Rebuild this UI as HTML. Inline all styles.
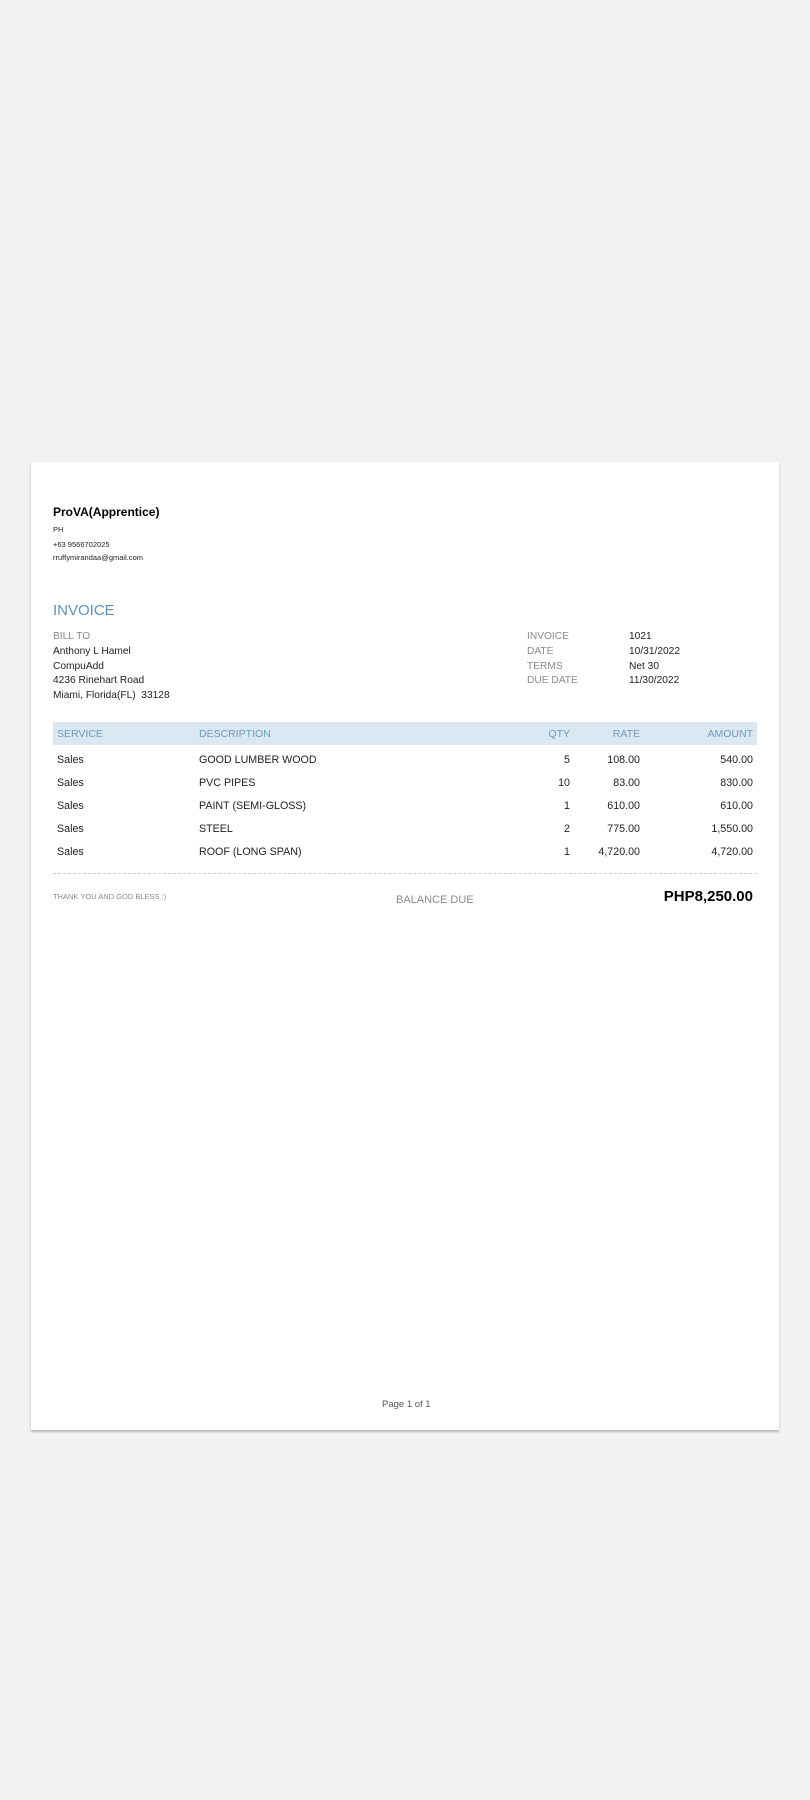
<!DOCTYPE html>
<html><head><meta charset="utf-8"><style>
*{margin:0;padding:0;box-sizing:border-box}
body{width:810px;height:1800px;background:#f0f2f4;font-family:"Liberation Sans",Arial,sans-serif;position:relative;overflow:hidden}
.page{position:absolute;left:31px;top:462px;width:748px;height:968px;background:#fff;box-shadow:0 2px 2px rgba(0,0,0,.25)}
.t{position:absolute;white-space:nowrap;line-height:1;color:#222}
.g{color:#8a8a8a}
.hdr{position:absolute;left:22px;top:260px;width:704px;height:23px;background:#dce8f1}
.h{color:#6b9bbd;font-size:10.5px}
.r{text-align:right}
.b{font-size:10.7px}
</style></head><body>
<div class="page">
<div class="t" style="left:22px;top:44px;font-size:12px;font-weight:bold;color:#000">ProVA(Apprentice)</div>
<div class="t" style="left:22px;top:64px;font-size:7.5px">PH</div>
<div class="t" style="left:22px;top:79px;font-size:7.5px">+63 9566702025</div>
<div class="t" style="left:22px;top:92px;font-size:7.5px">rruffymirandaa@gmail.com</div>
<div class="t" style="left:22px;top:141px;font-size:15px;color:#5b93bb">INVOICE</div>
<div class="t g" style="left:22px;top:170px;font-size:10.2px">BILL TO</div>
<div class="t" style="left:22px;top:185px;font-size:10.2px">Anthony L Hamel</div>
<div class="t" style="left:22px;top:200px;font-size:10.2px">CompuAdd</div>
<div class="t" style="left:22px;top:214px;font-size:10.2px">4236 Rinehart Road</div>
<div class="t" style="left:22px;top:229px;font-size:10.2px">Miami, Florida(FL)&nbsp; 33128</div>
<div class="t g" style="left:496px;top:170px;font-size:10.2px">INVOICE</div>
<div class="t g" style="left:496px;top:185px;font-size:10.2px">DATE</div>
<div class="t g" style="left:496px;top:200px;font-size:10.2px">TERMS</div>
<div class="t g" style="left:496px;top:214px;font-size:10.2px">DUE DATE</div>
<div class="t" style="left:598px;top:170px;font-size:10.2px">1021</div>
<div class="t" style="left:598px;top:185px;font-size:10.2px">10/31/2022</div>
<div class="t" style="left:598px;top:200px;font-size:10.2px">Net 30</div>
<div class="t" style="left:598px;top:214px;font-size:10.2px">11/30/2022</div>
<div class="hdr"></div>
<div class="t h" style="left:26px;top:267px">SERVICE</div>
<div class="t h" style="left:168px;top:267px">DESCRIPTION</div>
<div class="t h r" style="right:209px;top:267px">QTY</div>
<div class="t h r" style="right:139px;top:267px">RATE</div>
<div class="t h r" style="right:26px;top:267px">AMOUNT</div>

<div class="t b" style="left:26px;top:293px">Sales</div><div class="t b" style="left:168px;top:293px">GOOD LUMBER WOOD</div><div class="t b r" style="right:209px;top:293px">5</div><div class="t b r" style="right:139px;top:293px">108.00</div><div class="t b r" style="right:26px;top:293px">540.00</div>
<div class="t b" style="left:26px;top:316px">Sales</div><div class="t b" style="left:168px;top:316px">PVC PIPES</div><div class="t b r" style="right:209px;top:316px">10</div><div class="t b r" style="right:139px;top:316px">83.00</div><div class="t b r" style="right:26px;top:316px">830.00</div>
<div class="t b" style="left:26px;top:339px">Sales</div><div class="t b" style="left:168px;top:339px">PAINT (SEMI-GLOSS)</div><div class="t b r" style="right:209px;top:339px">1</div><div class="t b r" style="right:139px;top:339px">610.00</div><div class="t b r" style="right:26px;top:339px">610.00</div>
<div class="t b" style="left:26px;top:362px">Sales</div><div class="t b" style="left:168px;top:362px">STEEL</div><div class="t b r" style="right:209px;top:362px">2</div><div class="t b r" style="right:139px;top:362px">775.00</div><div class="t b r" style="right:26px;top:362px">1,550.00</div>
<div class="t b" style="left:26px;top:385px">Sales</div><div class="t b" style="left:168px;top:385px">ROOF (LONG SPAN)</div><div class="t b r" style="right:209px;top:385px">1</div><div class="t b r" style="right:139px;top:385px">4,720.00</div><div class="t b r" style="right:26px;top:385px">4,720.00</div>

<div style="position:absolute;left:22px;top:411px;width:704px;border-top:1px dashed #ccc"></div>
<div class="t g" style="left:22px;top:431px;font-size:7.5px">THANK YOU AND GOD BLESS :)</div>
<div class="t g" style="left:365px;top:433px;font-size:11px">BALANCE DUE</div>
<div class="t r" style="right:26px;top:427px;font-size:15px;font-weight:bold;color:#000">PHP8,250.00</div>
<div class="t" style="left:351px;top:938px;font-size:9.5px;color:#555">Page 1 of 1</div>
</div>
</body></html>
